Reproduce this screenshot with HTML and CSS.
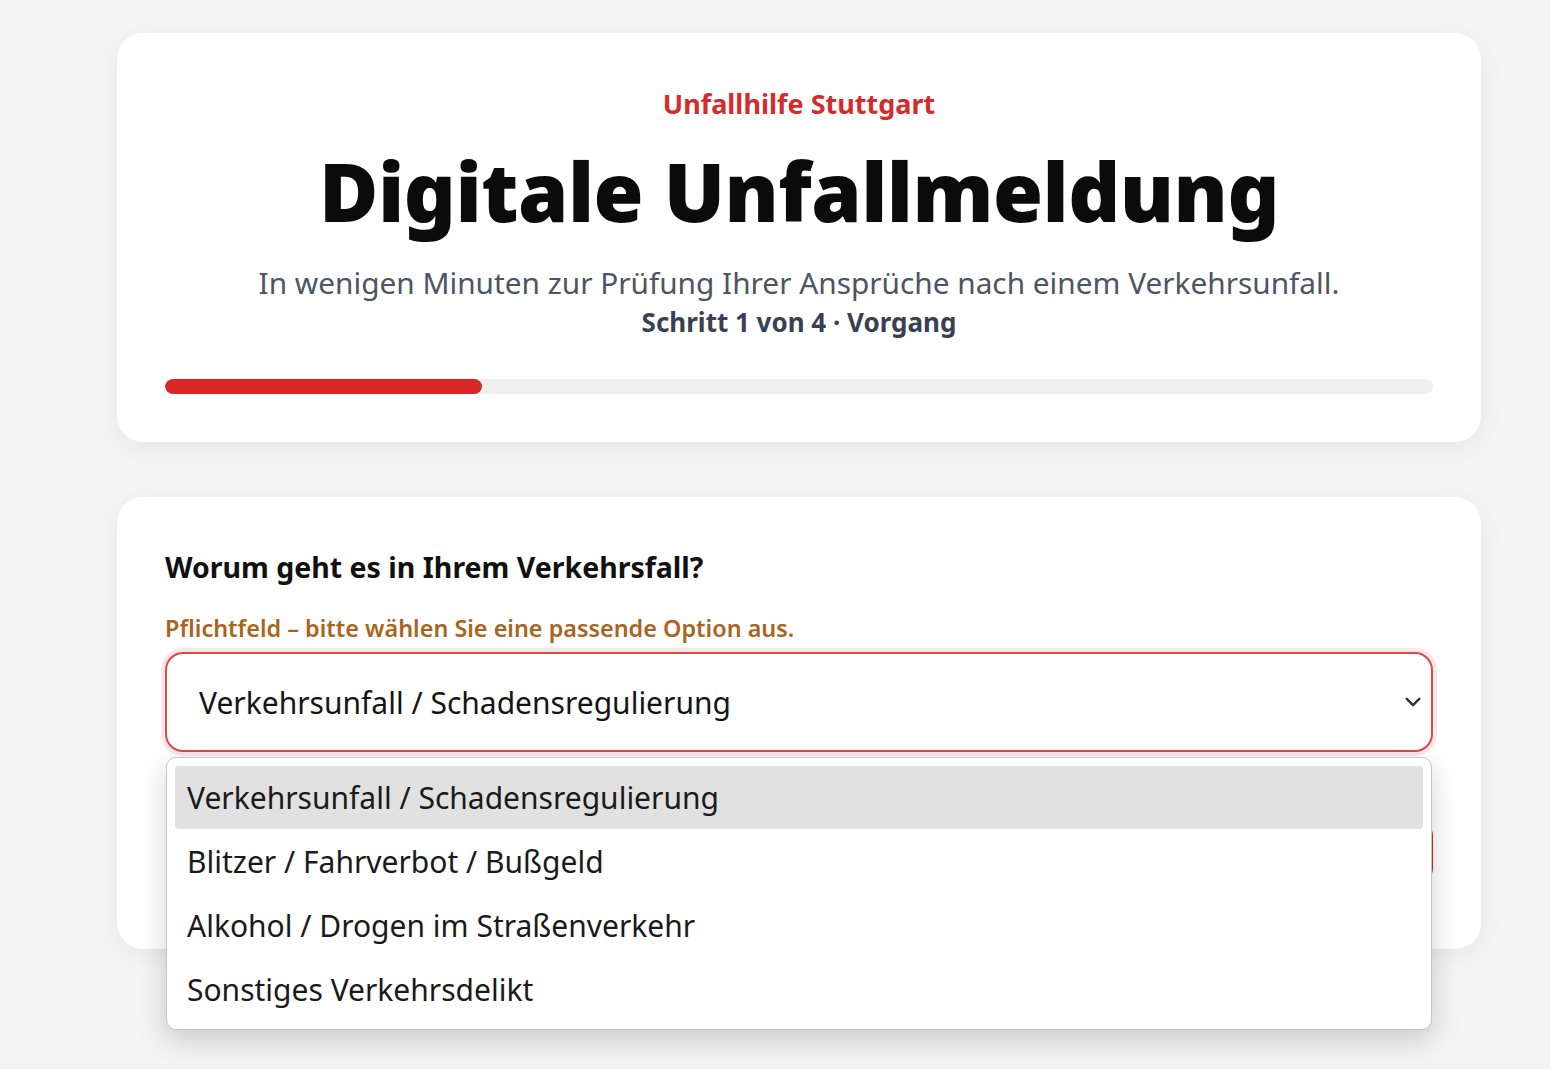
FILE: index.html
```html
<!DOCTYPE html>
<html lang="de">
<head>
<meta charset="utf-8">
<title>Digitale Unfallmeldung</title>
<link rel="stylesheet" href="styles.css">
</head>
<body>
<main class="page">
  <section class="card header-card">
    <p class="brand">Unfallhilfe Stuttgart</p>
    <h1 class="title">Digitale Unfallmeldung</h1>
    <p class="subtitle">In wenigen Minuten zur Prüfung Ihrer Ansprüche nach einem Verkehrsunfall.</p>
    <p class="step">Schritt 1 von 4 · Vorgang</p>
    <div class="progress"><div class="progress-fill" style="width:25%"></div></div>
  </section>

  <section class="card form-card">
    <h2 class="question">Worum geht es in Ihrem Verkehrsfall?</h2>
    <p class="hint">Pflichtfeld – bitte wählen Sie eine passende Option aus.</p>
    <div class="field">
      <div class="select">
        <span class="select-value">Verkehrsunfall / Schadensregulierung</span>
        <svg class="chevron" width="16" height="16" viewBox="0 0 16 16"><path d="M3 5.5 L8 10.5 L13 5.5" fill="none" stroke="#333" stroke-width="2" stroke-linecap="round" stroke-linejoin="round"/></svg>
      </div>
      <ul class="dropdown">
        <li class="option active">Verkehrsunfall / Schadensregulierung</li>
        <li class="option">Blitzer / Fahrverbot / Bußgeld</li>
        <li class="option">Alkohol / Drogen im Straßenverkehr</li>
        <li class="option">Sonstiges Verkehrsdelikt</li>
      </ul>
    </div>
    <div class="actions">
      <button class="btn-next">Weiter</button>
    </div>
  </section>
</main>
</body>
</html>
```

FILE: styles.css
```css
* { box-sizing: border-box; }

html, body {
  margin: 0;
  padding: 0;
}

body {
  background: #f4f4f4;
  font-family: "Noto Sans", "Open Sans", sans-serif;
  color: #111;
  height: 1069px;
  overflow: hidden;
}

.page {
  width: 1364px;
  margin-left: 117px;
  padding-top: 33px;
  display: flex;
  flex-direction: column;
  gap: 55px;
}

.card {
  background: #fff;
  border-radius: 26px;
  box-shadow: 0 6px 24px rgba(0, 0, 0, 0.06);
  padding: 48px;
}

.header-card {
  height: 409px;
  display: flex;
  flex-direction: column;
  align-items: center;
  padding-top: 56px;
}

.brand {
  margin: 0;
  color: #d62b2b;
  font-weight: 700;
  font-size: 27px;
  line-height: 30px;
}

.title {
  margin: 24px 0 0;
  font-weight: 900;
  font-size: 81px;
  line-height: 96px;
  letter-spacing: -0.5px;
  color: #0b0b0b;
}

.subtitle {
  margin: 24px 0 0;
  color: #4b5563;
  font-size: 29.8px;
  line-height: 40px;
  font-weight: 400;
}

.step {
  margin: 0;
  color: #374151;
  font-size: 26px;
  line-height: 38px;
  font-weight: 700;
}

.progress {
  margin-top: 38px;
  align-self: stretch;
  height: 16px;
  background: #efefef;
  border-radius: 8px;
  overflow: hidden;
}

.progress-fill {
  height: 100%;
  background: #d62828;
  border-radius: 8px;
}

.form-card {
  height: 452px;
  padding-top: 50px;
}

.question {
  margin: 0;
  font-size: 28.5px;
  line-height: 40px;
  font-weight: 700;
  color: #111;
}

.hint {
  margin: 26px 0 0;
  color: #a8651d;
  font-size: 23.4px;
  line-height: 30px;
  font-weight: 600;
}

.field {
  position: relative;
  margin-top: 9px;
}

.select {
  height: 100px;
  border: 2px solid #dc4b4b;
  border-radius: 18px;
  box-shadow: 0 0 0 4px rgba(220, 60, 60, 0.12);
  display: flex;
  align-items: center;
  justify-content: space-between;
  padding: 0 8px 0 32px;
  background: #fff;
}

.select-value {
  font-size: 30px;
  color: #141414;
}

.chevron {
  width: 20px;
  height: 20px;
}

.actions {
  display: flex;
  justify-content: flex-end;
  margin-top: 68px;
}

.btn-next {
  height: 64px;
  padding: 0 44px;
  border: none;
  border-radius: 16px;
  background: #d62828;
  color: #fff;
  font-family: inherit;
  font-weight: 700;
  font-size: 24px;
}

.dropdown {
  position: absolute;
  left: 1px;
  right: 1px;
  top: 105px;
  margin: 0;
  padding: 8px;
  list-style: none;
  background: #fff;
  border: 1px solid #c4c4c4;
  border-radius: 10px;
  box-shadow: 0 10px 28px rgba(0, 0, 0, 0.18);
  z-index: 10;
}

.option {
  height: 64px;
  display: flex;
  align-items: center;
  padding-left: 12px;
  font-size: 30px;
  color: #1a1a1a;
  border-radius: 4px;
}

.option.active {
  background: #e1e1e1;
  height: 63px;
}
```
